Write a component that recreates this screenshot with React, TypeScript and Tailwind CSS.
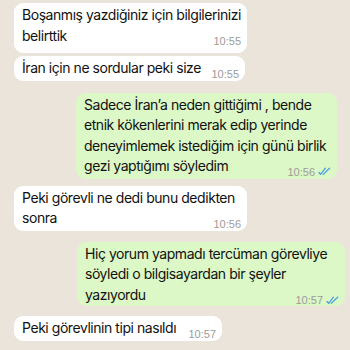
import React from "react";

type Msg = {
  lines: string[];
  time: string;
  out?: boolean;
  box: string;
};

const messages: Msg[] = [
  {
    lines: ["Boşanmış yazdiğiniz için bilgilerinizi", "belirttik"],
    time: "10:55",
    box: "mt-[3px] ml-[14px] w-[233px] pb-[7px]",
  },
  {
    lines: ["İran için ne sordular peki size"],
    time: "10:55",
    box: "mt-[3px] ml-[14px] w-[231px] pb-[2px]",
  },
  {
    lines: [
      "Sadece İran’a neden gittiğimi , bende",
      "etnik kökenlerini merak edip yerinde",
      "deneyimlemek istediğim için günü birlik",
      "gezi yaptığımı söyledim",
    ],
    time: "10:56",
    out: true,
    box: "mt-[12px] ml-[76px] w-[261px] pb-[2px]",
  },
  {
    lines: ["Peki görevli ne dedi bunu dedikten", "sonra"],
    time: "10:56",
    box: "mt-[7px] ml-[14px] w-[233px] pb-[2px]",
  },
  {
    lines: [
      "Hiç yorum yapmadı tercüman görevliye",
      "söyledi o bilgisayardan bir şeyler",
      "yazıyordu",
    ],
    time: "10:57",
    out: true,
    box: "mt-[11px] ml-[77px] w-[268px] pb-[1px]",
  },
  {
    lines: ["Peki görevlinin tipi nasıldı"],
    time: "10:57",
    box: "mt-[10px] ml-[14px] w-[208px] pb-[2px]",
  },
];

const Ticks = () => (
  <svg width="13" height="9" viewBox="0 0 13 9" fill="none" className="ml-[3px]">
    <path d="M1 5.5 L2.6 7.4 L7.4 1.2" stroke="#4a9fe6" strokeWidth="1.3" strokeLinecap="round" strokeLinejoin="round" />
    <path d="M5.2 7.4 L11.6 1.2" stroke="#4a9fe6" strokeWidth="1.3" strokeLinecap="round" />
  </svg>
);

const Bubble = ({ msg }: { msg: Msg }) => {
  const last = msg.lines[msg.lines.length - 1];
  const rest = msg.lines.slice(0, -1);
  return (
    <div
      className={`${msg.box} self-start shrink-0 rounded-[9px] pl-[8px] pr-[6px] pt-[2px] text-[14px] leading-[20.5px] tracking-[-0.45px] text-[#111] ${
        msg.out ? "bg-[#dcf8c6]" : "bg-white"
      }`}
    >
      {rest.map((l) => (
        <div key={l} className="whitespace-nowrap">
          {l}
        </div>
      ))}
      <div className="flex items-end justify-between gap-2 h-[20.5px]">
        <span className="whitespace-nowrap">{last}</span>
        <span className="flex items-center text-[11px] leading-[14px] tracking-normal text-[#9b9b9b] mb-[-2px] font-['Liberation_Sans',Arial,sans-serif]">
          {msg.time}
          {msg.out && <Ticks />}
        </span>
      </div>
    </div>
  );
};

export default function App() {
  return (
    <div className="w-[350px] h-[350px] overflow-hidden bg-[#ebe4da] font-['Inter',sans-serif] flex flex-col">
      {messages.map((m) => (
        <Bubble key={m.time + m.lines[0]} msg={m} />
      ))}
    </div>
  );
}
